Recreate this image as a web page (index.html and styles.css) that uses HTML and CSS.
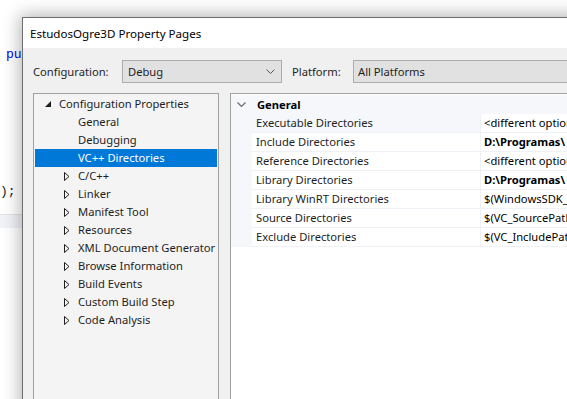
FILE: index.html
```html
<!DOCTYPE html>
<html lang="en">
<head>
    <meta charset="UTF-8">
    <title>EstudosOgre3D Property Pages</title>
    <link rel="stylesheet" href="styles.css">
</head>
<body>

    <div class="editor">
        <div class="code-line first"><span class="kw">pu</span></div>
        <div class="code-line close">);</div>
        <div class="code-line current"></div>
    </div>

    <div class="dialog">
        <div class="titlebar">EstudosOgre3D Property Pages</div>
        <div class="dialog-body">
            <div class="config-row">
                <span class="label">Configuration:</span>
                <div class="combo combo-config">
                    <span>Debug</span>
                    <svg class="chevron" width="9" height="6" viewBox="0 0 9 6"><path d="M0.5 0.5 L4.5 4.5 L8.5 0.5" fill="none" stroke="#555" stroke-width="1"/></svg>
                </div>
                <span class="label label-platform">Platform:</span>
                <div class="combo combo-platform"><span>All Platforms</span></div>
            </div>

            <div class="panes">
                <div class="tree">
                    <div class="tree-item root">
                        <svg class="exp" width="6" height="6" viewBox="0 0 6 6"><path d="M6 0 L6 6 L0 6 Z" fill="#1e1e1e"/></svg>
                        <span>Configuration Properties</span>
                    </div>
                    <div class="tree-item leaf">General</div>
                    <div class="tree-item leaf">Debugging</div>
                    <div class="tree-item leaf selected">VC++ Directories</div>
                    <div class="tree-item node"><svg class="col" width="6" height="9" viewBox="0 0 6 9"><path d="M0.5 0.5 L5 4.5 L0.5 8.5 Z" fill="none" stroke="#1e1e1e"/></svg><span>C/C++</span></div>
                    <div class="tree-item node"><svg class="col" width="6" height="9" viewBox="0 0 6 9"><path d="M0.5 0.5 L5 4.5 L0.5 8.5 Z" fill="none" stroke="#1e1e1e"/></svg><span>Linker</span></div>
                    <div class="tree-item node"><svg class="col" width="6" height="9" viewBox="0 0 6 9"><path d="M0.5 0.5 L5 4.5 L0.5 8.5 Z" fill="none" stroke="#1e1e1e"/></svg><span>Manifest Tool</span></div>
                    <div class="tree-item node"><svg class="col" width="6" height="9" viewBox="0 0 6 9"><path d="M0.5 0.5 L5 4.5 L0.5 8.5 Z" fill="none" stroke="#1e1e1e"/></svg><span>Resources</span></div>
                    <div class="tree-item node"><svg class="col" width="6" height="9" viewBox="0 0 6 9"><path d="M0.5 0.5 L5 4.5 L0.5 8.5 Z" fill="none" stroke="#1e1e1e"/></svg><span>XML Document Generator</span></div>
                    <div class="tree-item node"><svg class="col" width="6" height="9" viewBox="0 0 6 9"><path d="M0.5 0.5 L5 4.5 L0.5 8.5 Z" fill="none" stroke="#1e1e1e"/></svg><span>Browse Information</span></div>
                    <div class="tree-item node"><svg class="col" width="6" height="9" viewBox="0 0 6 9"><path d="M0.5 0.5 L5 4.5 L0.5 8.5 Z" fill="none" stroke="#1e1e1e"/></svg><span>Build Events</span></div>
                    <div class="tree-item node"><svg class="col" width="6" height="9" viewBox="0 0 6 9"><path d="M0.5 0.5 L5 4.5 L0.5 8.5 Z" fill="none" stroke="#1e1e1e"/></svg><span>Custom Build Step</span></div>
                    <div class="tree-item node"><svg class="col" width="6" height="9" viewBox="0 0 6 9"><path d="M0.5 0.5 L5 4.5 L0.5 8.5 Z" fill="none" stroke="#1e1e1e"/></svg><span>Code Analysis</span></div>
                </div>

                <div class="grid">
                    <div class="grid-cat">
                        <svg class="cat-chev" width="9" height="6" viewBox="0 0 9 6"><path d="M0.5 0.5 L4.5 4.5 L8.5 0.5" fill="none" stroke="#6a6a6a" stroke-width="1.2"/></svg>
                        <span>General</span>
                    </div>
                    <div class="grid-row focused"><div class="name">Executable Directories</div><div class="value">&lt;different options&gt;</div></div>
                    <div class="grid-row"><div class="name">Include Directories</div><div class="value bold">D:\Programas\</div></div>
                    <div class="grid-row"><div class="name">Reference Directories</div><div class="value">&lt;different options&gt;</div></div>
                    <div class="grid-row"><div class="name">Library Directories</div><div class="value bold">D:\Programas\</div></div>
                    <div class="grid-row"><div class="name">Library WinRT Directories</div><div class="value">$(WindowsSDK_</div></div>
                    <div class="grid-row"><div class="name">Source Directories</div><div class="value">$(VC_SourcePath)</div></div>
                    <div class="grid-row"><div class="name">Exclude Directories</div><div class="value">$(VC_IncludePath)</div></div>
                </div>
            </div>
        </div>
    </div>

</body>
</html>
```

FILE: styles.css
```css
body {
    margin: 0;
    width: 567px;
    height: 399px;
    overflow: hidden;
    position: relative;
    background: #fff;
    font-family: "Segoe UI", "Noto Sans", sans-serif;
    font-size: 11.2px;
    color: #1e1e1e;
}

/* code editor behind the dialog */
.editor {
    padding-top: 47px;
    font-family: "Liberation Mono", monospace;
    font-size: 13px;
}
.code-line {
    height: 16px;
    line-height: 16px;
    white-space: pre;
}
.code-line.first {
    padding-left: 6px;
}
.code-line .kw {
    color: #0000ff;
}
.code-line.close {
    margin-top: 121px;
}
.code-line.current {
    height: 13px;
    margin-top: 14px;
    border-top: 1px solid #e2e2e2;
    background: #f1f1f8;
}

/* the dialog window */
.dialog {
    position: absolute;
    left: 22px;
    top: 17px;
    width: 580px;
    height: 400px;
    border: 1px solid #6f6f6f;
    background: #f0f0f0;
    box-shadow: 0 0 16px 2px rgba(0, 0, 0, 0.3);
}
.titlebar {
    height: 30px;
    line-height: 31px;
    padding-left: 7px;
    background: #fff;
    color: #000;
    font-size: 11.6px;
}
.dialog-body {
    padding: 12px 0 0 10px;
}
.config-row {
    display: flex;
    align-items: center;
    height: 23px;
}
.label {
    width: 89px;
}
.label-platform {
    width: 61px;
}
.combo {
    box-sizing: border-box;
    height: 23px;
    border: 1px solid #adadad;
    background: #e1e1e1;
    display: flex;
    align-items: center;
    padding-left: 5px;
}
.combo-config {
    width: 160px;
    margin-right: 10px;
    justify-content: space-between;
    padding-right: 6px;
}
.combo-platform {
    flex: 1;
    padding-left: 4px;
}

.panes {
    display: flex;
    gap: 11px;
    margin-top: 10px;
}
.tree {
    box-sizing: border-box;
    width: 186px;
    height: 320px;
    border: 1px solid #a0a0a0;
    background: #f4f4f4;
    padding: 1px 1px 0;
}
.tree-item {
    height: 18px;
    line-height: 18px;
    display: flex;
    align-items: center;
    white-space: nowrap;
}
.tree-item svg {
    flex-shrink: 0;
}
.tree-item.root {
    padding-left: 10px;
}
.tree-item.root .exp {
    margin-right: 8px;
}
.tree-item.leaf {
    padding-left: 43px;
}
.tree-item.node {
    padding-left: 29px;
}
.tree-item.node .col {
    margin-right: 8px;
}
.tree-item.selected {
    background: #0078d7;
    color: #fff;
}

.grid {
    flex: 1;
    height: 320px;
    border: 1px solid #a0a0a0;
    background: #fff;
    padding-top: 1px;
}
.grid-cat {
    height: 19px;
    display: flex;
    align-items: center;
    background: #f5f7fb;
    font-weight: bold;
    color: #000;
}
.cat-chev {
    margin: 0 11px 0 6px;
}
.grid-row {
    display: flex;
    height: 19px;
    line-height: 18px;
    padding-left: 21px;
    background: #f5f7fb;
    white-space: nowrap;
}
.grid-row .name {
    box-sizing: border-box;
    width: 229px;
    padding-left: 4px;
    background: #fff;
    border-bottom: 1px solid #f0f1f6;
    border-right: 1px solid #f0f1f6;
}
.grid-row.focused .name {
    background: #f5f7fb;
}
.grid-row .value {
    flex: 1;
    padding-left: 3px;
    background: #fff;
    border-bottom: 1px solid #f0f1f6;
    overflow: hidden;
    color: #000;
}
.grid-row .value.bold {
    font-weight: bold;
}
```
